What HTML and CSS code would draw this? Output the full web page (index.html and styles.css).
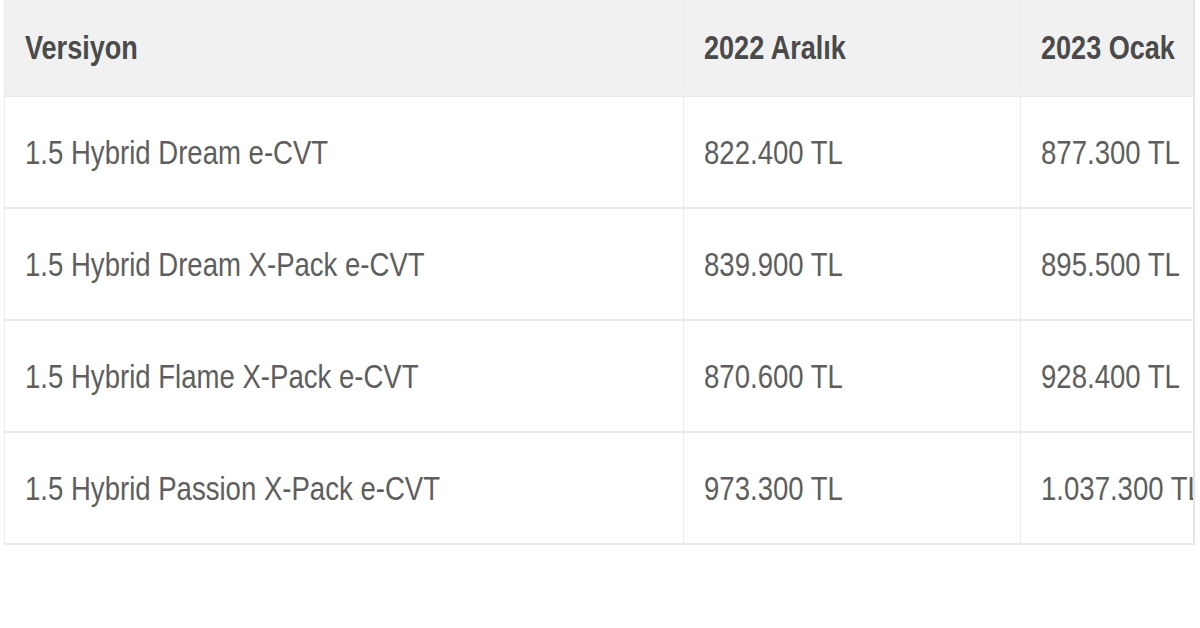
FILE: index.html
```html
<!DOCTYPE html>
<html lang="tr">
<head>
<meta charset="utf-8">
<link rel="stylesheet" href="styles.css">
</head>
<body>
<div class="frame">
<table class="prices">
  <colgroup>
    <col class="c1"><col class="c2"><col class="c3">
  </colgroup>
  <thead>
    <tr><th><span class="t">Versiyon</span></th><th><span class="t">2022 Aralık</span></th><th><span class="t">2023 Ocak</span></th></tr>
  </thead>
  <tbody>
    <tr><td><span class="t">1.5 Hybrid Dream e-CVT</span></td><td><span class="t">822.400 TL</span></td><td><span class="t">877.300 TL</span></td></tr>
    <tr><td><span class="t">1.5 Hybrid Dream X-Pack e-CVT</span></td><td><span class="t">839.900 TL</span></td><td><span class="t">895.500 TL</span></td></tr>
    <tr><td><span class="t">1.5 Hybrid Flame X-Pack e-CVT</span></td><td><span class="t">870.600 TL</span></td><td><span class="t">928.400 TL</span></td></tr>
    <tr><td><span class="t">1.5 Hybrid Passion X-Pack e-CVT</span></td><td><span class="t">973.300 TL</span></td><td><span class="t">1.037.300 TL</span></td></tr>
  </tbody>
</table>
</div>
</body>
</html>
```

FILE: styles.css
```css
html, body {
  margin: 0;
  padding: 0;
  background: #ffffff;
}
.frame {
  width: 1189px;
  margin-left: 4px;
  overflow: hidden;
  border-right: 2px solid #e4e4e4;
}
.prices {
  width: 1189px;
  table-layout: fixed;
  border-collapse: collapse;
  font-family: "Liberation Sans", Arial, sans-serif;
  font-size: 33px;
  color: #5e5e5e;
}
.c1 { width: 679px; }
.c2 { width: 337px; }
.c3 { width: 173px; }
.prices th, .prices td {
  text-align: left;
  padding: 0 0 0 20px;
  white-space: nowrap;
  overflow: hidden;
  border-left: 1px solid #ececec;
  border-bottom: 2px solid #ececec;
}
.t {
  display: inline-block;
  transform: scaleX(0.835);
  transform-origin: left center;
}
.prices th .t {
  transform: scaleX(0.82);
}
.prices th {
  height: 95px;
  background: #f1f1f1;
  color: #4a4a4a;
  font-weight: bold;
}
.prices td {
  height: 108px;
  padding-top: 2px;
}
```
